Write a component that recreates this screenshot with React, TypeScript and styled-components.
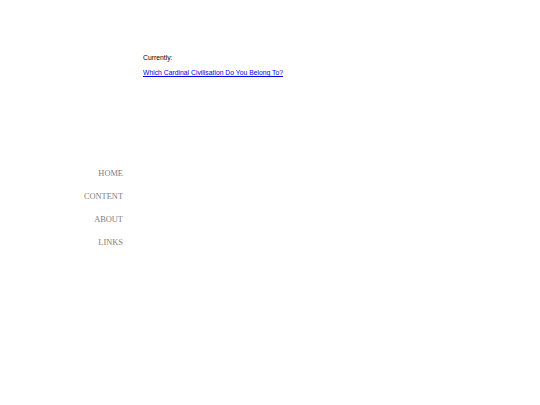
import React from 'react';
import styled, { createGlobalStyle } from 'styled-components';

const GlobalStyle = createGlobalStyle`
  body {
    margin: 0;
    background: #ffffff;
  }
`;

const Page = styled.div`
  display: grid;
  grid-template-columns: 123px 1fr;
  column-gap: 20px;
  padding-top: 53px;
`;

const Side = styled.nav`
  display: flex;
  flex-direction: column;
  align-items: flex-end;
  gap: 11px;
  padding-top: 91px;
  grid-row: 2;
  grid-column: 1;
`;

const NavLink = styled.a`
  font-family: "Liberation Serif", "Times New Roman", serif;
  font-size: 8.4px;
  line-height: 12px;
  color: #808080;
  text-decoration: none;
`;

const Main = styled.main`
  grid-row: 1;
  grid-column: 2;
  font-family: "Liberation Sans", Arial, sans-serif;
  font-size: 6.8px;
`;

const Label = styled.p`
  margin: 0 0 6px;
  line-height: 9px;
  color: #000000;
`;

const StoryLink = styled.a`
  color: #0000ee;
  text-decoration: underline;
  line-height: 9px;
`;

const links = ['HOME', 'CONTENT', 'ABOUT', 'LINKS'];

export default function App() {
  return (
    <>
      <GlobalStyle />
      <Page>
        <Main>
          <Label>Currently:</Label>
          <StoryLink href="#">Which Cardinal Civilisation Do You Belong To?</StoryLink>
        </Main>
        <Side>
          {links.map((l) => (
            <NavLink key={l} href="#">{l}</NavLink>
          ))}
        </Side>
      </Page>
    </>
  );
}
